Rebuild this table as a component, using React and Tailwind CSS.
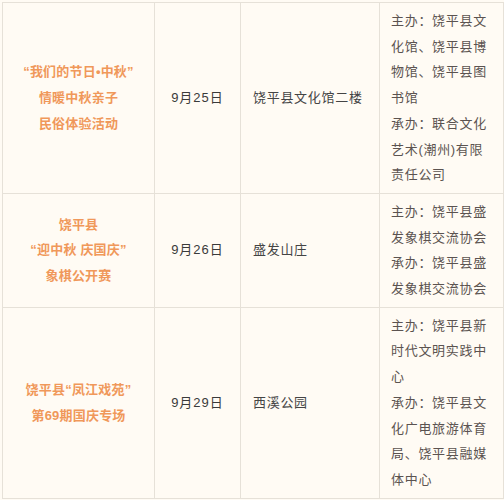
import React from "react";

const rows = [
  {
    title: ["“我们的节日•中秋”", "情暖中秋亲子", "民俗体验活动"],
    date: "9月25日",
    place: "饶平县文化馆二楼",
    org: "主办：饶平县文化馆、饶平县博物馆、饶平县图书馆",
    co: "承办：联合文化艺术(潮州)有限责任公司",
  },
  {
    title: ["饶平县", "“迎中秋 庆国庆”", "象棋公开赛"],
    date: "9月26日",
    place: "盛发山庄",
    org: "主办：饶平县盛发象棋交流协会",
    co: "承办：饶平县盛发象棋交流协会",
  },
  {
    title: ["饶平县“凤江戏苑”", "第69期国庆专场"],
    date: "9月29日",
    place: "西溪公园",
    org: "主办：饶平县新时代文明实践中心",
    co: "承办：饶平县文化广电旅游体育局、饶平县融媒体中心",
  },
];

export default function App() {
  return (
    <div
      className="h-[500px] w-[504px] overflow-hidden bg-[#fffbf4] pl-[2px] pt-[2px]"
      style={{
        fontFamily: '"Liberation Sans", "Noto Sans CJK SC", sans-serif',
      }}
    >
      <table className="w-[501px] table-fixed border-collapse text-[13px] leading-[25.7px] tracking-[0.7px]">
        <colgroup>
          <col className="w-[152px]" />
          <col className="w-[86px]" />
          <col className="w-[139px]" />
          <col className="w-[124px]" />
        </colgroup>
        <tbody>
          {rows.map((r, i) => (
            <tr key={i}>
              <td className="border border-[#e6e1d8] px-[8px] py-[5px] text-center align-middle font-bold tracking-[0.2px] text-[#f0985a]">
                {r.title.map((t) => (
                  <div key={t}>{t}</div>
                ))}
              </td>
              <td className="border border-[#e6e1d8] py-[5px] text-center align-middle tracking-[1px] text-[#3a3a3a]">
                {r.date}
              </td>
              <td className="border border-[#e6e1d8] py-[5px] pl-[12px] pr-[6px] align-middle text-[#444]">
                {r.place}
              </td>
              <td className="border border-[#e6e1d8] py-[5px] pl-[11px] align-middle text-[#5b5350]">
                <div className="w-[97px] break-all">
                  <div>{r.org}</div>
                  <div>{r.co}</div>
                </div>
              </td>
            </tr>
          ))}
        </tbody>
      </table>
    </div>
  );
}
